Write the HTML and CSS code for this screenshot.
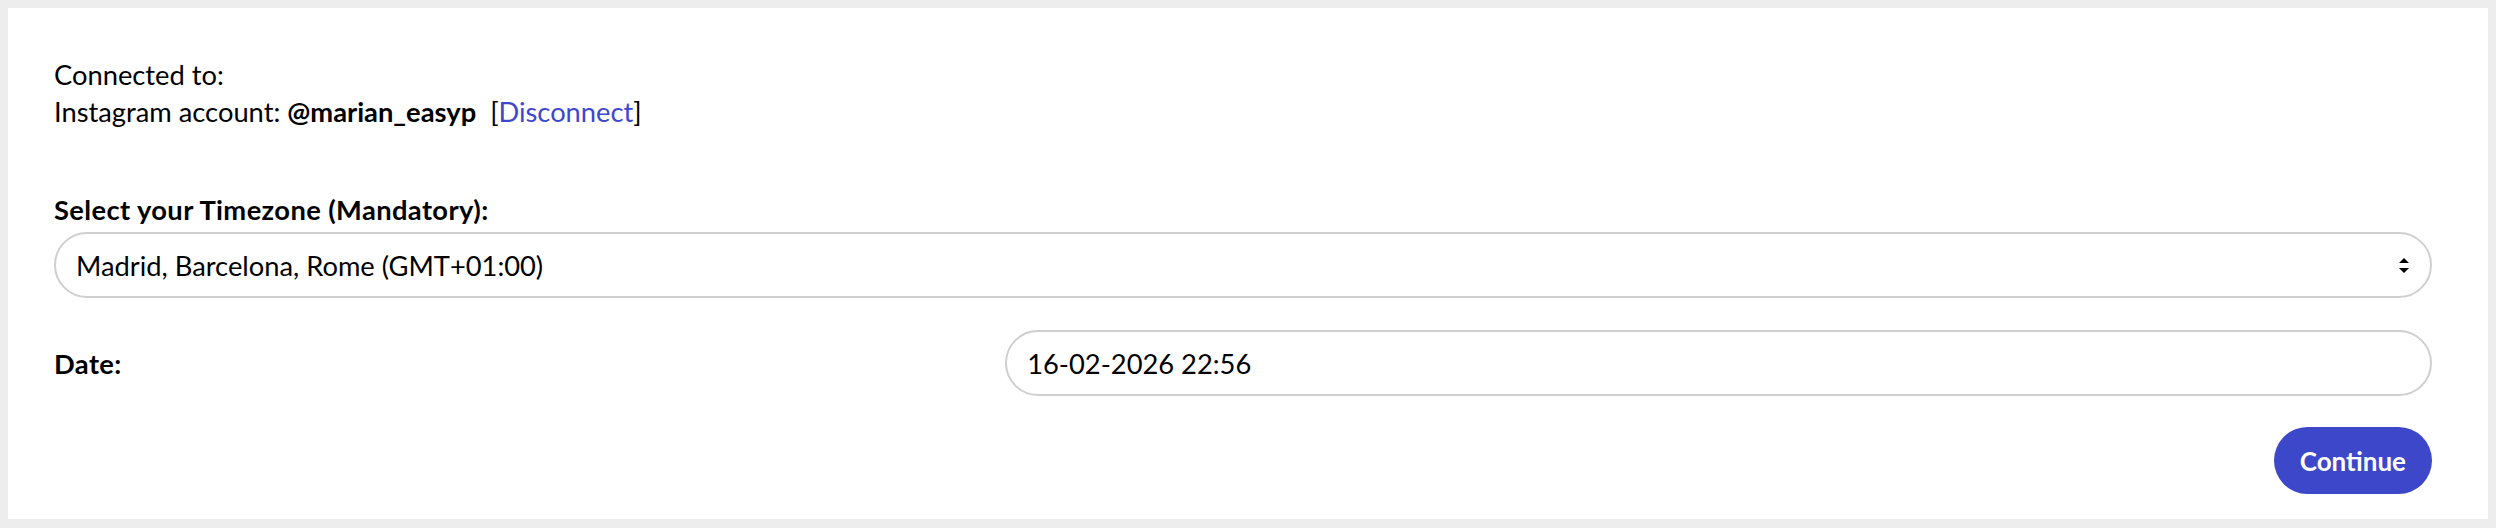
FILE: index.html
```html
<!DOCTYPE html>
<html lang="en">
<head>
<meta charset="utf-8">
<title>Connect</title>
<link rel="stylesheet" href="styles.css">
</head>
<body>
<div class="card">
  <div class="connected">
    <div>Connected to:</div>
    <div>Instagram account: <strong>@marian_easyp</strong>&nbsp; [<a href="#" class="link">Disconnect</a>]</div>
  </div>
  <label class="label" for="tz">Select your Timezone (Mandatory):</label>
  <div class="select-wrap">
    <select id="tz" class="control select">
      <option>Madrid, Barcelona, Rome (GMT+01:00)</option>
    </select>
    <svg class="arrows" width="10" height="15" viewBox="0 0 10 15"><path d="M0 5 L5 0 L10 5 Z M0 10 L5 15 L10 10 Z" fill="#000"/></svg>
  </div>
  <div class="date-row">
    <div class="label date-label">Date:</div>
    <input class="control date-input" type="text" value="16-02-2026 22:56">
  </div>
  <div class="actions">
    <button class="btn">Continue</button>
  </div>
</div>
</body>
</html>
```
FILE: styles.css
```css
html, body {
  margin: 0;
  padding: 0;
}
body {
  background: #ededed;
  padding: 8px 8px 9px 8px;
  font-family: "Lato", "Liberation Sans", sans-serif;
  font-size: 27.3px;
  line-height: 37px;
  color: #000;
}
.card {
  background: #fff;
  height: 511px;
  box-sizing: border-box;
  padding: 48px 56px 0 46px;
  display: flex;
  flex-direction: column;
}
.connected {
  margin-bottom: 61px;
}
.link {
  color: #3f48cc;
  text-decoration: none;
}
.label {
  display: block;
  font-weight: 700;
  letter-spacing: 0.4px;
}
.select-wrap {
  position: relative;
  margin-top: 4px;
}
.control {
  box-sizing: border-box;
  height: 66px;
  border: 2px solid #cfcfcf;
  border-radius: 33px;
  background: #fff;
  font-family: inherit;
  font-size: 27.3px;
  color: #000;
  padding: 0 20px;
  outline: none;
}
.select {
  width: 100%;
  -webkit-appearance: none;
  appearance: none;
}
.arrows {
  position: absolute;
  right: 23px;
  top: 26px;
  pointer-events: none;
}
.date-row {
  display: grid;
  grid-template-columns: 40% 60%;
  align-items: center;
  margin-top: 32px;
}
.date-input {
  width: 100%;
}
.actions {
  display: flex;
  justify-content: flex-end;
  margin-top: 31px;
}
.btn {
  height: 67px;
  padding: 0 26px;
  border: none;
  border-radius: 34px;
  background: #3c47c9;
  color: #fff;
  font-family: inherit;
  font-weight: 700;
  font-size: 26px;
  letter-spacing: 0;
}
```
